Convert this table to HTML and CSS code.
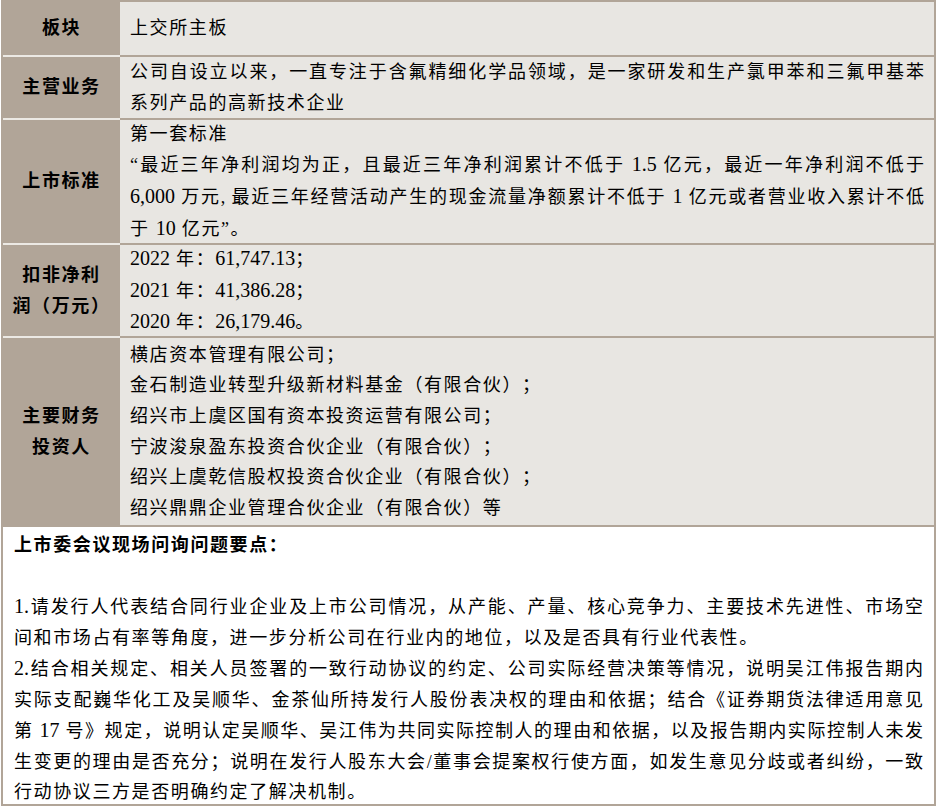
FILE: index.html
```html
<!DOCTYPE html>
<html lang="zh-CN">
<head>
    <meta charset="UTF-8">
    <title>上市委会议问询</title>
    <meta name="viewport" content="width=device-width, initial-scale=1.0">
    <link rel="stylesheet" href="styles.css">
</head>
<body>
    <div class="page">
        <div class="table">
            <div class="head">板块</div>
            <div class="cell"><p>上交所主板</p></div>

            <div class="head">主营业务</div>
            <div class="cell">
                <p class="fill">公司自设立以来，一直专注于含氟精细化学品领域，是一家研发和生产氯甲苯和三氟甲基苯</p>
                <p>系列产品的高新技术企业</p>
            </div>

            <div class="head">上市标准</div>
            <div class="cell">
                <p>第一套标准</p>
                <p class="fill">“最近三年净利润均为正，且最近三年净利润累计不低于 <span class="num">1.5</span> 亿元，最近一年净利润不低于</p>
                <p class="fill"><span class="num">6,000</span> 万元, 最近三年经营活动产生的现金流量净额累计不低于 <span class="num">1</span> 亿元或者营业收入累计不低</p>
                <p>于 <span class="num">10</span> 亿元”。</p>
            </div>

            <div class="head">扣非净利<br>润（万元）</div>
            <div class="cell">
                <p><span class="num">2022</span> 年：<span class="num">61,747.13</span>；</p>
                <p><span class="num">2021</span> 年：<span class="num">41,386.28</span>；</p>
                <p><span class="num">2020</span> 年：<span class="num">26,179.46</span>。</p>
            </div>

            <div class="head last">主要财务<br>投资人</div>
            <div class="cell last">
                <p>横店资本管理有限公司；</p>
                <p>金石制造业转型升级新材料基金（有限合伙）；</p>
                <p>绍兴市上虞区国有资本投资运营有限公司；</p>
                <p>宁波浚泉盈东投资合伙企业（有限合伙）；</p>
                <p>绍兴上虞乾信股权投资合伙企业（有限合伙）；</p>
                <p>绍兴鼎鼎企业管理合伙企业（有限合伙）等</p>
            </div>
        </div>

        <div class="notes">
            <p class="title">上市委会议现场问询问题要点：</p>
            <p>&nbsp;</p>
            <p class="fill"><span class="num">1.</span>请发行人代表结合同行业企业及上市公司情况，从产能、产量、核心竞争力、主要技术先进性、市场空</p>
            <p>间和市场占有率等角度，进一步分析公司在行业内的地位，以及是否具有行业代表性。</p>
            <p class="fill"><span class="num">2.</span>结合相关规定、相关人员签署的一致行动协议的约定、公司实际经营决策等情况，说明吴江伟报告期内</p>
            <p class="fill">实际支配巍华化工及吴顺华、金茶仙所持发行人股份表决权的理由和依据；结合《证券期货法律适用意见</p>
            <p class="fill">第 <span class="num">17</span> 号》规定，说明认定吴顺华、吴江伟为共同实际控制人的理由和依据，以及报告期内实际控制人未发</p>
            <p class="fill">生变更的理由是否充分；说明在发行人股东大会/董事会提案权行使方面，如发生意见分歧或者纠纷，一致</p>
            <p>行动协议三方是否明确约定了解决机制。</p>
        </div>
    </div>
</body>
</html>
```

FILE: styles.css
```css
body { margin: 0; background: #fff; color: #000; font-family: "Liberation Serif", "Noto Sans CJK SC", serif; font-size: 18px; text-spacing-trim: space-all; }
p { margin: 0; }
.page { width: 935px; margin-left: 1px; }

.table { display: grid; grid-template-columns: 117px 1fr; grid-template-rows: 55px 63px 125px 93px 187px; border: 2px solid #b1a598; border-bottom: none; background: #e8e6e2; }
.head { display: flex; align-items: center; justify-content: center; text-align: center; background: #b1a598; font-weight: bold; line-height: 30.6px; letter-spacing: 1.6px; border-bottom: 2px solid #ece9e4; }
.cell { display: flex; flex-direction: column; justify-content: center; padding: 0 10px; line-height: 30.6px; letter-spacing: 1.6px; border-bottom: 2px solid #b1a598; }
.head.last, .cell.last { border-bottom: none; }

.fill { text-align: justify; text-align-last: justify; letter-spacing: 0; }
.num { font-size: 20px; letter-spacing: 0; }

.notes { border: 2px solid #b1a598; background: #fff; padding: 3px 11px 0; height: 281px; box-sizing: border-box; line-height: 30.5px; letter-spacing: 1.6px; }
.notes .title { font-weight: bold; }
```
